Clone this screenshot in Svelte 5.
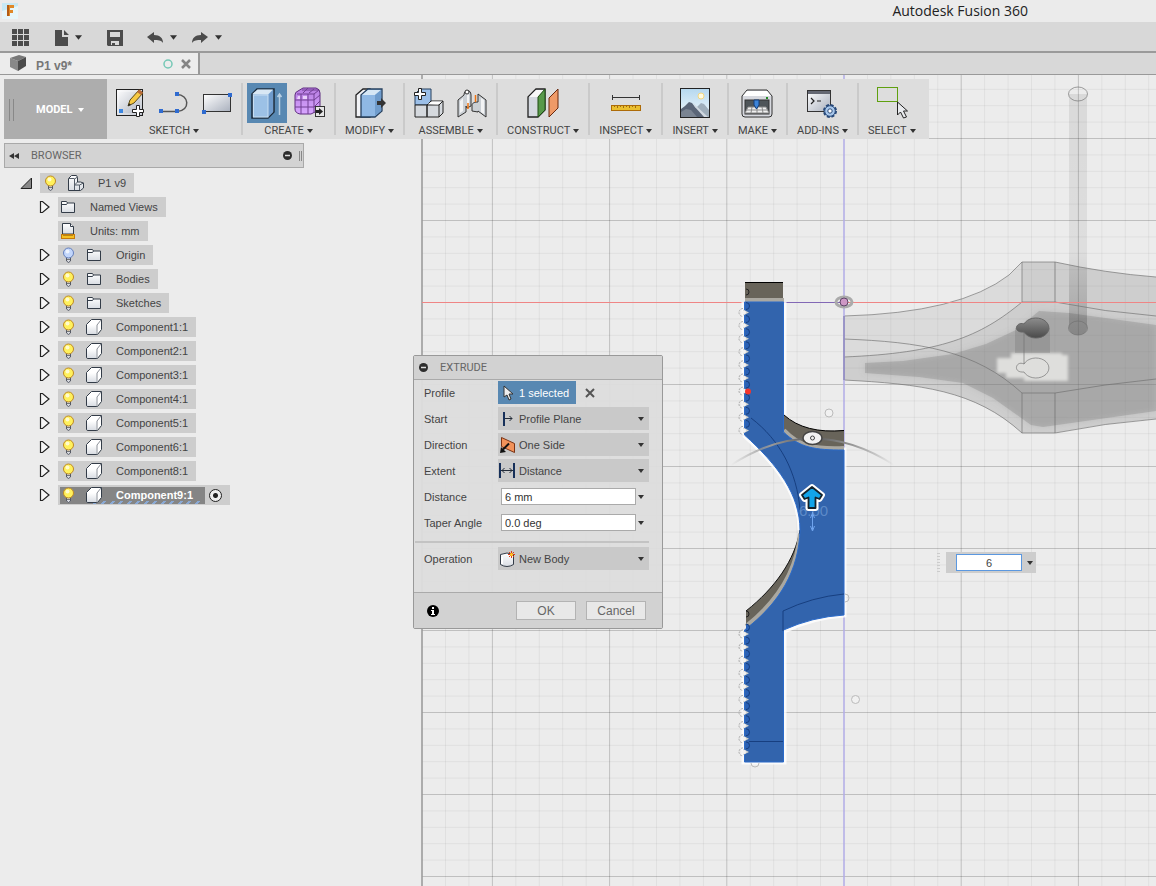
<script lang="ts">
  type TreeNode = {
    label: string;
    icon: string;
    bulb?: 'on' | 'off';
    leaf?: boolean;
    active?: boolean;
  };

  const groups = [
    { label: 'SKETCH', tools: ['sketch', 'arc', 'rect'] },
    { label: 'CREATE', tools: ['extrude', 'form'] },
    { label: 'MODIFY', tools: ['presspull'] },
    { label: 'ASSEMBLE', tools: ['component', 'joint'] },
    { label: 'CONSTRUCT', tools: ['plane'] },
    { label: 'INSPECT', tools: ['measure'] },
    { label: 'INSERT', tools: ['image'] },
    { label: 'MAKE', tools: ['print'] },
    { label: 'ADD-INS', tools: ['script'] },
    { label: 'SELECT', tools: ['select'] }
  ];

  const nodes: TreeNode[] = [
    { label: 'Named Views', icon: 'folder' },
    { label: 'Units: mm', icon: 'units', leaf: true },
    { label: 'Origin', icon: 'folder', bulb: 'off' },
    { label: 'Bodies', icon: 'folder', bulb: 'on' },
    { label: 'Sketches', icon: 'folder', bulb: 'on' },
    ...[1, 2, 3, 4, 5, 6, 8].map(
      (n): TreeNode => ({ label: `Component${n}:1`, icon: 'cube', bulb: 'on' })
    ),
    { label: 'Component9:1', icon: 'cube', bulb: 'on', active: true }
  ];

  const options = [
    { id: 'start', label: 'Start', value: 'Profile Plane' },
    { id: 'direction', label: 'Direction', value: 'One Side' },
    { id: 'extent', label: 'Extent', value: 'Distance' }
  ];

  let distance = $state('6 mm');
  let taper = $state('0.0 deg');
  let quick = $state('6');

  // Grid spacing in model view units
  const STEP_X = 23.44;
  const STEP_Y = 16.4;
  const columns = Array.from({ length: 32 }, (_, i) => i - 18);
  const rows = Array.from({ length: 50 }, (_, i) => i - 14);
  const upperTeeth = Array.from({ length: 10 }, (_, i) => 312.5 + i * 13.1);
  const lowerTeeth = Array.from({ length: 10 }, (_, i) => 634 + i * 13.1);
</script>

{#snippet caret()}
  <svg class="caret" viewBox="0 0 6 4" aria-hidden="true"><path d="M0 0h6L3 4z" fill="currentColor" /></svg>
{/snippet}

{#snippet tool(name: string)}
  <svg class="tool-icon" viewBox="0 0 32 32" aria-hidden="true">
    {#if name === 'sketch'}
      <rect x="1.500" y="2.500" width="26" height="26" fill="url(#steel)" stroke="#222" />
      <rect x="3" y="4" width="23" height="23" fill="none" stroke="#fff" opacity=".6" />
      <rect x="4" y="22" width="4" height="4" fill="#3b86e0" />
      <path d="M13 19l2-6 9-10 4 3-9 10z" fill="#f6c944" stroke="#5c4a16" />
      <path d="M22 5l2-2.500 4 3-2 2.500z" fill="#b86a3a" />
      <path d="M13 19l1-3 2 2z" fill="#222" />
      <path d="M21.500 18.500h3v4h4v3h-4v4h-3v-4h-4v-3h4z" fill="#fff" stroke="#222" />
    {:else if name === 'arc'}
      <path d="M3 24.500h16c14-1 12-17 0-17" fill="none" stroke="#555" stroke-width="1.500" />
      <rect x="1" y="22" width="4" height="4" fill="#2f6bd0" />
      <rect x="17" y="22" width="4" height="4" fill="#2f6bd0" />
      <rect x="17" y="5" width="4" height="4" fill="#2f6bd0" />
    {:else if name === 'rect'}
      <rect x="2.500" y="7.500" width="27" height="17" fill="url(#steel)" stroke="#333" />
      <rect x="1" y="23" width="4" height="4" fill="#2f6bd0" />
      <rect x="27" y="6" width="4" height="4" fill="#2f6bd0" />
    {:else if name === 'extrude'}
      <path d="M1 7l5-5h17v23l-6 6H1z" fill="#95b8df" stroke="#1b2b3c" stroke-width="1.500" />
      <path d="M1.500 7l5-4.500H22L17 7.500z" fill="#d8e7f4" />
      <path d="M17 8l5-5v22l-5 5z" fill="#6f9bcc" />
      <rect x="2.500" y="8" width="14.500" height="22" fill="#9cc1e6" stroke="#c8def2" />
      <path d="M28.500 28V8m-2 2l2-3 2 3" fill="none" stroke="#b9d0e4" stroke-width="1.500" />
    {:else if name === 'form'}
      <path d="M1 8q0-3 3-4l5-3h13q4 1 4 5v13q-1 5-5 6l-4 2H6q-5-1-5-5z" fill="url(#violet)" stroke="#5f2d80" />
      <path d="M1 13h19l6-5M1 20h19l6-6M7 7v20M14 7v20M20 7v19M3 7h17l5-4M8 3h16M9 6l5-5M15 6l5-4" fill="none" stroke="#713f93" />
      <path d="M4 9h2v3H3zM9 9h4v3H9z" fill="#ead0fb" />
      <rect x="21.500" y="19.500" width="9" height="10" fill="#e5e5e5" stroke="#333" />
      <path d="M22 23h3v-2l4 3.500-4 3.500v-2h-3z" fill="#222" />
    {:else if name === 'presspull'}
      <path d="M2 8l7-6h7v28H2z" fill="#f2f3f6" stroke="#222" stroke-width="1.300" />
      <path d="M7 8l7-6h14v22l-7 6H7z" fill="#8fb8e4" stroke="#27415f" stroke-width="1.300" />
      <path d="M8 8l6-5h13l-6 5z" fill="#d6e7f5" />
      <path d="M21 8l6-5v21l-6 5z" fill="#6f9ccc" />
      <path d="M23 14h4v-3l5 5-5 5v-3h-4z" fill="#333" />
    {:else if name === 'component'}
      <path d="M2 7l5-5h11v12l-4 4H2z" fill="#9bbfe8" stroke="#27415f" />
      <path d="M2 18h12v12H2zM14 18l4-4h12v12l-4 4H14z" fill="#d5d9de" stroke="#222" />
      <path d="M14 18h12v12M26 18l4-4" fill="none" stroke="#222" />
      <path d="M15 17l4-2.500h10l-4 3z" fill="#fff" />
      <path d="M5.500 1.500h3v4h4v3h-4v4h-3v-4h-4v-3h4z" fill="#fff" stroke="#222" />
    {:else if name === 'joint'}
      <path d="M2 13l6-5c0-6 7-6 7 0v11l-4 2-1-2v6l-8 5z" fill="#cbd0d5" stroke="#333" />
      <path d="M30 13l-8-6v8c-3 0-6 1-6 3v6l6 1v-1l8 6z" fill="#cbd0d5" stroke="#333" />
      <path d="M4 14l3-3v13l-3 2zM11 7l2 1v10h-2zM28 13v14l-3-2V11z" fill="#f2f3f4" />
      <path d="M12 16v6M19.500 8v7" stroke="#ee7412" stroke-width="1.500" />
      <circle cx="11" cy="5" r="2" fill="#fff" stroke="#333" />
    {:else if name === 'plane'}
      <path d="M1 10l8-8h9v21l-7 7H1z" fill="#d5d9e0" stroke="#222" stroke-width="1.300" />
      <path d="M2 10l7-7h8l-6 7z" fill="#f8f8f8" />
      <path d="M11 10l7-8v21l-7 7z" fill="#58994a" stroke="#1e4d14" />
      <path d="M22 11l9-9v19l-9 9z" fill="#ef9a67" stroke="#68280e" />
    {:else if name === 'measure'}
      <path d="M2 10.500h28M2.500 8v5M29.500 8v5" fill="none" stroke="#333" />
      <rect x="1.500" y="18.500" width="29" height="5" fill="#eabf2f" stroke="#ad6b08" />
      <path d="M4.500 19v1m3-1v2m3-2v1m3-1v2m3-2v1m3-1v2m3-2v1m3-1v2" stroke="#9d6b15" />
    {:else if name === 'image'}
      <rect x="1.500" y="1.500" width="29" height="29" fill="url(#sky)" stroke="#222" />
      <circle cx="22" cy="9" r="3" fill="#fffbe0" stroke="#f3d780" />
      <path d="M16 22l6-6 3 1 5 6v7H16z" fill="#9faebb" />
      <path d="M2 22l4-3 4-4 3 1 3 4 11 10H2z" fill="#5a6577" />
      <path d="M2 25l5-3 5 1 6 7H2z" fill="#7a8492" />
      <path d="M14 16l15 14h-4l-9-10z" fill="#d0d8e0" />
    {:else if name === 'print'}
      <path d="M1 9l5-6h20l5 6v18q0 3-3 3H4q-3 0-3-3z" fill="#d7d9df" stroke="#333" />
      <path d="M2 9l4-5h20l4 5z" fill="#fff" />
      <rect x="4" y="13" width="24" height="14" fill="#4f5559" stroke="#333" />
      <path d="M7 20h18l3 6H4z" fill="#f0f0f0" stroke="#888" />
      <path d="M11 20l-1 6m6-6v6m5-6l1 6M6 23h20" stroke="#888" />
      <path d="M13 13h5v5l-2.500 4-2.500-4z" fill="#3d84d8" stroke="#143e7c" />
      <rect x="25" y="10" width="2" height="2" fill="#228a22" />
    {:else if name === 'script'}
      <rect x="1.500" y="3.500" width="23" height="21" fill="url(#steel)" stroke="#333" />
      <rect x="2" y="4" width="22" height="3" fill="#646873" />
      <path d="M5 11l3 3-3 3m6-3h4" fill="none" stroke="#222" stroke-width="1.200" />
      <circle cx="24" cy="24" r="6" fill="#a9c8ec" stroke="#274878" stroke-width="2" stroke-dasharray="3 1.700" />
      <circle cx="24" cy="24" r="5.300" fill="#a9c8ec" stroke="#274878" />
      <circle cx="24" cy="24" r="2.200" fill="#fff" stroke="#274878" />
    {:else if name === 'select'}
      <rect x="1.500" y=".5" width="20" height="14" fill="none" stroke="#5fa00f" />
      <path d="M21.500 15v13l3-3 3 6 3-1-3-6h4z" fill="#e9ebee" stroke="#222" />
    {/if}
  </svg>
{/snippet}

{#snippet bulb(on: boolean)}
  <svg class="icon" viewBox="0 0 16 16" aria-hidden="true">
    <path d="M6.500 10h4v4q-2 3-4 0z" fill="#d7d9df" stroke="#555a66" />
    <circle cx="8.500" cy="6" r="5" fill={on ? '#fff15c' : '#c2d6fb'} stroke={on ? '#c08a22' : '#6580bd'} />
    <circle cx="7.500" cy="4.500" r="2" fill="#fff" opacity=".7" />
    <path d="M7 12.500h3" stroke="#777" />
  </svg>
{/snippet}

{#snippet treeIcon(name: string)}
  <svg class="icon" viewBox="0 0 16 16" aria-hidden="true">
    {#if name === 'folder'}
      <path d="M1.500 13.500v-11h5l1 1.500h7v9.500z" fill="url(#paper)" stroke="#333c48" />
      <path d="M1.500 5.500h5l1-1.500" fill="none" stroke="#333c48" />
    {:else if name === 'units'}
      <path d="M2.500 11V.5h8l3 3V11z" fill="url(#paper)" stroke="#333c48" />
      <path d="M10.500.5v3h3" fill="#fff" stroke="#333c48" />
      <rect x="1.500" y="11.500" width="13" height="4" fill="#f6c022" stroke="#c57a0a" />
      <path d="M4 12v1m2-1v1m2-1v1m2-1v1m2-1v1" stroke="#7d4b05" />
    {:else if name === 'assembly'}
      <path d="M.5 3.500l3-3h5l1 2V7h3l3 1v5l-3 2.500H.5z" fill="url(#paper)" stroke="#333c48" />
      <path d="M6.500 15V4l3-2M1 3.500h5.500M6.500 10l3-3m-3 3h5l4-2m-4 2v5" fill="none" stroke="#555e69" />
    {:else}
      <path d="M.5 5.500l5-5h10v10l-4 5h-9.500q-1.500 0-1.500-1.500z" fill="#fff" stroke="#333c48" />
      <path d="M1 6h9.500v9H2.500q-1.500 0-1.500-1.500z" fill="url(#paper)" />
      <path d="M11 15.500V6l4-5" fill="none" stroke="#8b9098" />
    {/if}
  </svg>
{/snippet}

{#snippet optionIcon(name: string)}
  <svg class="icon" viewBox="0 0 16 16" aria-hidden="true">
    {#if name === 'start'}
      <path d="M5 1v14" stroke="#17305a" stroke-width="2" />
      <path d="M6 7.500h7M10.500 5L13 7.500 10.500 10" fill="none" stroke="#222b38" />
    {:else if name === 'direction'}
      <path d="M2.500.5l13 6v9l-13-6z" fill="#f1925a" stroke="#7a3314" />
      <path d="M10 6.500l-6 6" stroke="#111" stroke-width="2" />
      <path d="M1 16l1-6 5 5z" fill="#111" />
    {:else if name === 'extent'}
      <path d="M1 0v15M15 0v15" stroke="#17305a" stroke-width="2" />
      <path d="M2 7.500h12M5.500 5L3 7.500 5.500 10M10.500 5L13 7.500 10.500 10" fill="none" stroke="#222b38" />
    {:else}
      <path d="M1.500 3.500v10q6.500 4 13 0v-10q-6.500-3-13 0z" fill="url(#paper)" stroke="#333c48" />
      <path d="M3 6v7" stroke="#fff" stroke-width="2" />
      <path d="M12.500 0v7M9 3.500h7M10 1l5 5M15 1l-5 5" stroke="#e03a10" />
      <circle cx="12.500" cy="3.500" r="1.500" fill="#ffd327" />
    {/if}
  </svg>
{/snippet}

<svg class="defs" width="0" height="0" aria-hidden="true">
  <defs>
    <linearGradient id="steel" x2="1" y2="1"><stop stop-color="#fff" /><stop offset="1" stop-color="#a9b0bd" /></linearGradient>
    <linearGradient id="paper" x2="0" y2="1"><stop stop-color="#fff" /><stop offset="1" stop-color="#d9dde3" /></linearGradient>
    <linearGradient id="sky" x2="0" y2="1"><stop stop-color="#b5d8ef" /><stop offset="1" stop-color="#f1f7fa" /></linearGradient>
    <linearGradient id="violet" x2="0" y2="1"><stop stop-color="#b57be0" /><stop offset="1" stop-color="#d8a6ff" /></linearGradient>
  </defs>
</svg>

<div class="app">
  <header class="titlebar">
    <svg class="logo" viewBox="0 0 16 16" aria-hidden="true">
      <rect width="16" height="16" fill="#c7e8f4" />
      <path d="M0 8l16-5v13H0z" fill="#e6f6fa" />
      <path d="M5 13V2h7v3H8v2h3v3H8v3z" fill="#e08827" />
      <path d="M5 2h2v11H5z" fill="#b35d17" />
    </svg>
    <span>Autodesk Fusion 360</span>
  </header>

  <nav class="quickbar">
    <button aria-label="Show data panel">
      <svg viewBox="0 0 17 17" width="17" height="17" fill="#4c4c4c">
        {#each [0, 6, 12] as y}{#each [0, 6, 12] as x}<rect {x} {y} width="5" height="5" />{/each}{/each}
      </svg>
    </button>
    <button class="file" aria-label="File">
      <svg viewBox="0 0 14 16" width="14" height="16" fill="#4c4c4c"><path d="M0 0h7v7h6v9H0zM9 0l5 5H9z" /></svg>
      {@render caret()}
    </button>
    <button class="save" aria-label="Save">
      <svg viewBox="0 0 16 16" width="16" height="16"><path d="M0 0h16v16H1l-1-1z" fill="#4c4c4c" /><path d="M3 2h10v5H3zM4 11h8v4H4z" fill="#d9d9d9" /><path d="M5 13h3v2H5z" fill="#4c4c4c" /></svg>
    </button>
    <button class="undo" aria-label="Undo">
      <svg viewBox="0 0 17 14" width="17" height="14"><path d="M0 6l7-5v3c6 0 9 3 9 8-2-3-5-3-9-3v3z" fill="#4c4c4c" /></svg>
      {@render caret()}
    </button>
    <button class="redo" aria-label="Redo">
      <svg viewBox="0 0 17 14" width="17" height="14"><path d="M16 6L9 1v3C3 4 0 7 0 12c2-3 5-3 9-3v3z" fill="#4c4c4c" /></svg>
      {@render caret()}
    </button>
  </nav>

  <div class="tabs">
    <div class="tab">
      <svg viewBox="0 0 17 17" width="17" height="17" aria-hidden="true"><path d="M0 3l8 3v10l-8-4z" fill="#888" /><path d="M0 3l9-3 7 2-8 4z" fill="#777" /><path d="M8 6l8-4v9l-8 5z" fill="#4b4b4b" /></svg>
      <span class="tab-name">P1 v9*</span>
      <svg viewBox="0 0 10 10" width="10" height="10" aria-hidden="true"><circle cx="5" cy="5" r="4" fill="none" stroke="#75c8b6" stroke-width="1.500" /></svg>
      <button class="close" aria-label="Close tab">
        <svg viewBox="0 0 10 10" width="10" height="10"><path d="M1 1l8 8M9 1L1 9" stroke="#858585" stroke-width="2.500" /></svg>
      </button>
    </div>
  </div>

  <main class="viewport">
    <svg class="canvas" viewBox="0 75 1156 811" preserveAspectRatio="xMinYMin slice" aria-hidden="true">
      <defs>
        <filter id="soft"><feGaussianBlur stdDeviation="3" /></filter>
        <filter id="edge"><feGaussianBlur stdDeviation="1.500" /></filter>
        <linearGradient id="hole" x2="0" y2="1"><stop stop-color="#8d8d8d" /><stop offset="1" stop-color="#4a4a4a" /></linearGradient>
        <linearGradient id="orbit"><stop stop-color="#999" stop-opacity="0" /><stop offset=".25" stop-color="#999" /><stop offset=".5" stop-color="#555" /><stop offset=".75" stop-color="#999" /><stop offset="1" stop-color="#999" stop-opacity="0" /></linearGradient>
        <linearGradient id="rod" x2="0" y2="1"><stop stop-color="#000" stop-opacity=".08" /><stop offset=".65" stop-color="#000" stop-opacity=".06" /><stop offset="1" stop-color="#000" stop-opacity=".2" /></linearGradient>
      </defs>

      <!-- grid -->
      {#each columns as i}
        <path d="M{844 + i * STEP_X} 75V886" class="grid" class:major={i % 5 === 0} />
      {/each}
      {#each rows as i}
        <path d="M422 {302.5 + i * STEP_Y}H1156" class="grid" class:major={i % 5 === 0} />
      {/each}
      <path d="M422 75V886" stroke="#999" stroke-width="1.500" />

      <!-- ghosted handle -->
      <path d="M844 316Q960 313 1009 275L1022 262H1055Q1105 273 1156 277V419Q1105 423 1055 433H1022C975 390 920 384 844 380Z" fill="#777" fill-opacity=".14" />
      <path d="M844 357C940 353 980 337 1022 302H1055Q1105 312 1156 316V419Q1105 423 1055 433H1022C975 390 920 384 844 380Z" fill="#777" fill-opacity=".12" />
      <path d="M1022 262H1055Q1105 273 1156 277V316Q1105 312 1055 302H1022Z" fill="#777" fill-opacity=".12" />
      <path d="M865 363L903 361 953 354 986 344 1016 330 1039 311 1069 313 1156 325V411L1043 427 1031 425 993 398 963 383 919 377 865 373Z" fill="#777" fill-opacity=".2" filter="url(#soft)" />
      <path d="M865 363L903 361 953 354 986 344 1016 330 1039 311 1069 313 1156 325V411L1043 427 1031 425 993 398 963 383 919 377 865 373Z" fill="#777" fill-opacity=".3" />
      <path d="M997 358h14v-5h51v2h6v26h-44v-3h-18v-5h-9z" fill="#dededc" filter="url(#edge)" />
      <path d="M1015 328h35v25h-35z" fill="#555" fill-opacity=".2" />
      <path d="M1069 94h18v234a9 7 0 0 1-18 0z" fill="url(#rod)" />
      <g fill="none" stroke="#6f6f6f" stroke-opacity=".65">
        <path d="M844 316Q960 313 1009 275L1022 262H1055Q1105 273 1156 277" />
        <path d="M844 357C940 353 980 337 1022 302H1055Q1105 312 1156 316" />
        <path d="M844 339C920 342 975 350 1022 393H1055Q1105 384 1156 379" />
        <path d="M844 380C920 384 975 390 1022 433H1055Q1105 423 1156 419" />
        <path d="M1022 262V302M1055 262V302M1022 393V433M1055 393V433" />
        <ellipse cx="1078" cy="94" rx="9.500" ry="7" />
        <ellipse cx="1078" cy="328" rx="9.500" ry="7" />
        <path d="M1024 364C1016 360 1012 373 1024 372A13 10 0 1 0 1024 364V332" />
      </g>
      <path d="M1024 324C1016 321 1012 333 1024 332A13 10 0 1 0 1024 324Z" fill="url(#hole)" stroke="#666" />

      <!-- origin axes -->
      <path d="M422 302.500H745M844 302.500H1156" stroke="#ef8585" />
      <path d="M784 302.500H844" stroke="#8268b5" />
      <path d="M844 75V886" stroke="#b9b3ee" stroke-width="1.500" />
      <path d="M844 316V380" stroke="#7770a8" />

      <!-- body behind the profile -->
      <path class="halo" d="M744 435V302M784 302V432C800 448 815 450 844 450V615Q812 617 784 631V762H744V630" />
      <path class="halo" d="M744 435C778 465 800 495 800 530" />
      <path d="M745 282h38v20h-38z" fill="#68645a" />
      <path d="M745 282.500h38" stroke="#000" />
      <path d="M784 415Q805 434 844 430V451Q800 453 784 432Z" fill="#68645a" />
      <path d="M784 415Q805 434 844 430.500" fill="none" stroke="#000" />
      <path d="M746 611C775 588 795 560 800 530L803 545 770 620 746 628Z" fill="#68645a" />
      <path d="M746 611C775 588 795 560 800 530" fill="none" stroke="#111" />

      <!-- selected profile -->
      <path d="M745 300h39M784 430C800 447 815 449 844 448M800 534C797 568 779 600 746 626" fill="none" stroke="#aaa8a1" stroke-width="4" />
      <path d="M744.500 302H783.500V432C800 448 815 450 844 450V615Q812 617 783.500 630V762H744.500V630C780 603 799 570 800 530C800 495 778 465 744.500 435Z" fill="#3264ad" stroke="#2b6bca" />
      <path d="M751 418C780 440 797 472 800 510M783 631V611Q812 597 844 594M749 741.500H783" fill="none" stroke="#173f80" />

      {#each [...upperTeeth, ...lowerTeeth] as y}
        <path d="M743 {y - 3}L749 {y}L743 {y + 3}Z" fill="#d4d3cd" />
        <circle cx="744" cy={y} r="2" fill="#f2f2f2" />
        <path d="M743 {y - 4}a4 4 0 0 0 0 8" fill="none" stroke="#aaa" stroke-dasharray="2 1" />
        <path d="M746 {y - 10}a3.500 3.500 0 1 1 0 7" fill="#2961b7" stroke="#163d7d" />
      {/each}
      <path d="M746 289a3 3 0 1 1 0 6M746 611a3 3 0 1 1 0 6" fill="none" stroke="#222" />
      <circle cx="748" cy="391.500" r="3" fill="#f4352d" />

      <!-- manipulators -->
      <g fill="#f5f5f5" fill-opacity=".6" stroke="#bbb">
        <circle cx="829" cy="413" r="4" />
        <circle cx="855.500" cy="699.500" r="4" />
        <path d="M845 594a4 4 0 0 1 0 8" fill="none" />
        <path d="M751 763a4 4 0 0 0 8 0" fill="none" />
      </g>
      <ellipse cx="844" cy="302" rx="8" ry="5" fill="none" stroke="#aaa" stroke-width="3" />
      <circle cx="844" cy="302" r="4" fill="#ce98c5" stroke="#5e4568" />
      <path d="M731 465Q812 412 894 465" fill="none" stroke="url(#orbit)" stroke-width="2" />
      <ellipse cx="812.500" cy="438" rx="9.500" ry="6.500" fill="#f2f2f2" stroke="#444" stroke-width="1.500" />
      <circle cx="812.500" cy="438" r="2" fill="none" stroke="#444" />
      <text x="799" y="516" fill="#7aa4dc" font-size="15" fill-opacity=".6">6.00</text>
      <path d="M812.500 512v18m-2-12l2-5 2 5m-4 8l2 5 2-5" fill="none" stroke="#6fa4ee" />
      <path d="M812 487l10 8-2.500 4-4-1.500V508h-7v-10.500l-4 1.500-2.500-4z" fill="#fff" stroke="#fff" stroke-width="6" stroke-linejoin="round" />
      <path d="M812 487l10 8-2.500 4-4-1.500V508h-7v-10.500l-4 1.500-2.500-4z" fill="#12a4ea" stroke="#14222c" stroke-width="1.800" stroke-linejoin="round" />
    </svg>

    <div class="toolbar">
      <button class="workspace"><span>MODEL</span>{@render caret()}</button>
      {#each groups as group}
        <section class="group">
          <div class="tools">
            {#each group.tools as name}
              <button class="tool" class:active={name === 'extrude'} aria-label={name}>{@render tool(name)}</button>
            {/each}
          </div>
          <button class="menu">{group.label}{@render caret()}</button>
        </section>
      {/each}
    </div>

    <aside class="browser">
      <div class="browser-head">
        <svg viewBox="0 0 10 6" width="10" height="6" aria-hidden="true"><path d="M5 0v6L0 3zM10 0v6L5 3z" fill="#333" /></svg>
        <span>BROWSER</span>
        <button class="close" aria-label="Collapse browser">
          <svg viewBox="0 0 9 9" width="9" height="9"><circle cx="4.500" cy="4.500" r="4.500" fill="#2d2d2d" /><path d="M2 4.500h5" stroke="#ddd" stroke-width="1.500" /></svg>
        </button>
        <i class="grip"></i>
      </div>
      <ul class="tree">
        <li>
          <svg class="arrow" viewBox="0 0 12 12" aria-hidden="true"><path d="M1 11.500L11.500 1v10.500z" fill="#888" stroke="#222" /></svg>
          <span class="chip">{@render bulb(true)}{@render treeIcon('assembly')}<span class="name">P1 v9</span></span>
        </li>
        {#each nodes as node}
          <li class="child">
            <svg class="arrow" viewBox="0 0 12 14" aria-hidden="true">
              {#if !node.leaf}<path d="M2.500 1.500h2l6.500 5.500-6.500 5.500h-2z" fill="#f6f6f6" stroke="#222" stroke-width="1.200" />{/if}
            </svg>
            <span class="chip" class:current={node.active}>
              <span class="inner">
                {#if node.bulb}{@render bulb(node.bulb === 'on')}{/if}
                {@render treeIcon(node.icon)}
                <span class="name">{node.label}</span>
              </span>
              {#if node.active}
                <input type="radio" name="active-component" checked aria-label="Activate component" />
              {/if}
            </span>
          </li>
        {/each}
      </ul>
    </aside>

    <form class="dialog" onsubmit={(e) => e.preventDefault()}>
      <div class="dialog-head">
        <svg viewBox="0 0 9 9" width="9" height="9" aria-hidden="true"><circle cx="4.500" cy="4.500" r="4.500" fill="#2d2d2d" /><path d="M2 4.500h5" stroke="#ddd" stroke-width="1.500" /></svg>
        <span>EXTRUDE</span>
      </div>
      <div class="fields">
        <div class="field">
          <label for="profile-pick">Profile</label>
          <button type="button" id="profile-pick" class="pick">
            <svg viewBox="0 0 11 16" width="11" height="16" aria-hidden="true"><path d="M1 1v11l3-2 2 5 2-1-2-5h4z" fill="#eee" stroke="#333" /></svg>
            1 selected
          </button>
          <button type="button" class="close" aria-label="Clear selection">
            <svg viewBox="0 0 10 10" width="10" height="10"><path d="M1 1l8 8M9 1L1 9" stroke="#555" stroke-width="2" /></svg>
          </button>
        </div>
        {#each options as option}
          <div class="field">
            <label for={option.id}>{option.label}</label>
            <div class="drop">
              {@render optionIcon(option.id)}
              <select id={option.id}><option>{option.value}</option></select>
              {@render caret()}
            </div>
          </div>
        {/each}
        <div class="field">
          <label for="distance">Distance</label>
          <div class="entry"><input id="distance" type="text" bind:value={distance} />{@render caret()}</div>
        </div>
        <div class="field">
          <label for="taper">Taper Angle</label>
          <div class="entry"><input id="taper" type="text" bind:value={taper} />{@render caret()}</div>
        </div>
        <hr />
        <div class="field">
          <label for="operation">Operation</label>
          <div class="drop">
            {@render optionIcon('operation')}
            <select id="operation"><option>New Body</option></select>
            {@render caret()}
          </div>
        </div>
      </div>
      <div class="dialog-foot">
        <svg viewBox="0 0 12 12" width="12" height="12" aria-hidden="true"><circle cx="6" cy="6" r="6" fill="#000" /><path d="M5 2h2v2H5zM4 5h3v4h1v1H4V9h1V6H4z" fill="#fff" /></svg>
        <button type="submit">OK</button>
        <button type="button">Cancel</button>
      </div>
    </form>

    <div class="quick">
      <i class="dots"></i>
      <div class="quick-box">
        <input type="text" aria-label="Distance value" bind:value={quick} />
        {@render caret()}
      </div>
    </div>
  </main>
</div>

<style>
  :global(body) {
    margin: 0;
    background: #ececec;
  }
  .app {
    display: flex;
    flex-direction: column;
    min-height: 100vh;
    font: 11px/14px 'Liberation Sans', Arial, sans-serif;
    color: #444;
  }
  button,
  input,
  select {
    font: inherit;
    color: inherit;
    box-sizing: border-box;
  }
  button {
    display: flex;
    align-items: center;
    padding: 0;
    border: 0;
    background: none;
  }
  svg {
    flex: none;
    display: block;
  }
  .defs {
    position: absolute;
  }
  .caret {
    width: 6px;
    height: 4px;
    color: #333;
  }
  .icon {
    width: 16px;
    height: 16px;
  }

  .titlebar {
    display: flex;
    align-items: center;
    justify-content: space-between;
    height: 22px;
    padding: 0 128px 0 2px;
    background: #ebebeb;
    color: #222;
    font: 14px/22px 'Open Sans', sans-serif;
  }
  .logo {
    width: 16px;
    height: 16px;
  }
  .quickbar {
    display: flex;
    align-items: center;
    height: 27px;
    padding: 2px 0 0 12px;
    background: #d8d8d8;
    border-bottom: 2px solid #9a9a9a;
  }
  .quickbar button {
    gap: 6px;
  }
  .quickbar .caret {
    width: 7px;
    height: 5px;
  }
  .file {
    margin-left: 26px;
  }
  .save {
    margin-left: 25px;
  }
  .undo {
    margin-left: 24px;
  }
  .redo {
    margin-left: 15px;
  }
  .tabs {
    display: flex;
    height: 21px;
    background: #d8d8d8;
    border-bottom: 1px solid #999;
  }
  .tab {
    display: flex;
    align-items: center;
    box-sizing: border-box;
    width: 200px;
    padding: 0 7px 0 10px;
    background: #ececec;
    border-right: 2px solid #999;
  }
  .tab-name {
    flex: 1;
    margin-left: 9px;
    padding-top: 4px;
    font-size: 12px;
    font-weight: bold;
    color: #777;
  }
  .tab .close {
    margin-left: 8px;
  }

  .viewport {
    position: relative;
    flex: 1;
    overflow: hidden;
    padding: 4px;
  }
  .canvas {
    position: absolute;
    inset: 0;
    width: 100%;
    height: 100%;
  }
  .grid {
    stroke: #000;
    stroke-opacity: 0.05;
  }
  .grid.major {
    stroke-opacity: 0.19;
  }
  .halo {
    fill: none;
    stroke: #fff;
    stroke-opacity: 0.8;
    stroke-width: 5;
  }

  .toolbar {
    position: relative;
    display: flex;
    width: max-content;
    height: 60px;
    background: #ddd;
  }
  .workspace {
    width: 103px;
    gap: 5px;
    padding: 2px 0 0 5px;
    background: #adadad;
    color: #fff;
    font: bold 11px/14px Roboto, sans-serif;
  }
  .workspace::before {
    content: '';
    width: 3px;
    height: 22px;
    margin-right: 17px;
    border: solid #888;
    border-width: 0 1px;
  }
  .workspace .caret {
    color: #fff;
  }
  .group {
    display: flex;
    flex-direction: column;
    align-items: center;
    height: 52px;
    margin-top: 4px;
    padding: 0 4px;
    border-right: 2px solid #cacaca;
  }
  .group:last-child {
    padding-right: 6px;
    border-color: transparent;
  }
  .tools {
    display: flex;
    gap: 3px;
  }
  .tool {
    justify-content: center;
    width: 40px;
    height: 40px;
  }
  .tool.active {
    background: #5888b2;
  }
  .tool-icon {
    width: 32px;
    height: 32px;
  }
  .menu {
    gap: 3px;
    margin-top: 1px;
    padding: 0 5px;
    color: #444;
    font: 11px/14px Roboto, sans-serif;
  }

  .browser {
    position: relative;
    width: 300px;
    margin-top: 4px;
  }
  .browser-head {
    display: flex;
    align-items: center;
    box-sizing: border-box;
    height: 25px;
    padding: 0 1px 0 4px;
    border: 1px solid #a9a9a9;
    background: #d3d3d3;
    color: #666;
    font: 11px/14px Roboto, sans-serif;
  }
  .browser-head span {
    flex: 1;
    margin-left: 12px;
  }
  .grip {
    width: 1px;
    height: 10px;
    margin-left: 7px;
    border: solid #888;
    border-width: 0 1px;
  }
  .tree {
    margin: 0;
    padding: 3px 0 0 16px;
    list-style: none;
  }
  .tree li {
    display: flex;
    align-items: center;
    height: 24px;
  }
  .tree .child {
    padding-left: 18px;
  }
  .arrow {
    width: 12px;
    height: 14px;
    margin-right: 8px;
  }
  .tree .chip {
    display: flex;
    align-items: center;
    height: 20px;
    padding: 0 8px 0 2px;
    background: #cdcdcd;
  }
  .inner {
    display: flex;
    align-items: center;
  }
  .chip .icon + .icon {
    margin-left: 10px;
  }
  .name {
    margin-left: 14px;
  }
  .current .inner {
    height: 17px;
    padding-right: 12px;
    background: repeating-linear-gradient(135deg, #8aa9d4 0 2px, #858585 2px 6px) 27px 100% / 114px 3px no-repeat #858585;
  }
  .current .name {
    color: #fff;
    font-weight: bold;
  }
  .chip input {
    appearance: none;
    width: 13px;
    height: 13px;
    margin: 0 0 0 4px;
    border: 1px solid #222;
    border-radius: 50%;
    background: radial-gradient(circle, #222 0 2px, #eee 3px);
  }

  .dialog {
    position: absolute;
    left: 413px;
    top: 280px;
    box-sizing: border-box;
    width: 250px;
    border: 1px solid #999;
    border-radius: 2px;
    background: rgba(221, 221, 221, 0.96);
  }
  .dialog-head {
    display: flex;
    align-items: center;
    gap: 12px;
    height: 23px;
    padding-left: 5px;
    border-bottom: 1px solid #aaa;
    background: #d2d2d2;
    color: #666;
    font: 11px/14px Roboto, sans-serif;
  }
  .fields {
    display: flex;
    flex-direction: column;
    gap: 3px;
    padding: 1px 13px 22px 10px;
  }
  .field {
    display: flex;
    align-items: center;
    height: 23px;
  }
  .field label {
    flex: none;
    width: 74px;
  }
  .pick {
    gap: 5px;
    height: 23px;
    padding: 0 7px 0 5px;
    background: #5888b2;
    color: #fff;
  }
  .field .close {
    margin-left: 9px;
  }
  .drop,
  .entry {
    flex: 1;
    display: flex;
    align-items: center;
    min-width: 0;
    height: 23px;
    padding-right: 5px;
  }
  .drop {
    gap: 4px;
    padding-left: 1px;
    background: #c9c9c9;
  }
  select {
    flex: 1;
    min-width: 0;
    padding: 0;
    border: 0;
    appearance: none;
    background: none;
  }
  .entry {
    gap: 2px;
    padding-left: 3px;
  }
  .entry input {
    flex: 1;
    min-width: 0;
    height: 17px;
    padding: 0 3px;
    border: 1px solid #aaa;
    background: #fff;
    color: #333;
  }
  hr {
    width: 234px;
    height: 2px;
    margin: 4px 0 1px -9px;
    border: 0;
    background: #c3c3c3;
  }
  .dialog-foot {
    display: flex;
    align-items: center;
    gap: 10px;
    height: 35px;
    padding: 0 16px 0 13px;
    border-top: 1px solid #aaa;
    background: #d2d2d2;
  }
  .dialog-foot svg {
    margin-right: auto;
  }
  .dialog-foot button {
    justify-content: center;
    width: 60px;
    height: 19px;
    border: 1px solid #b3b3b3;
    background: #e8e8e8;
    color: #666;
    font-size: 12px;
  }

  .quick {
    position: absolute;
    left: 937px;
    top: 477px;
    display: flex;
    align-items: center;
    gap: 6px;
  }
  .dots {
    width: 3px;
    height: 20px;
    background: repeating-linear-gradient(#ccc 0 1px, transparent 1px 3px);
  }
  .quick-box {
    display: flex;
    align-items: center;
    gap: 5px;
    height: 21px;
    padding: 0 3px 0 10px;
    background: #cdcdcd;
  }
  .quick input {
    width: 66px;
    height: 17px;
    padding: 0;
    border: 1px solid #5b98e0;
    background: #fff;
    text-align: center;
  }
</style>
